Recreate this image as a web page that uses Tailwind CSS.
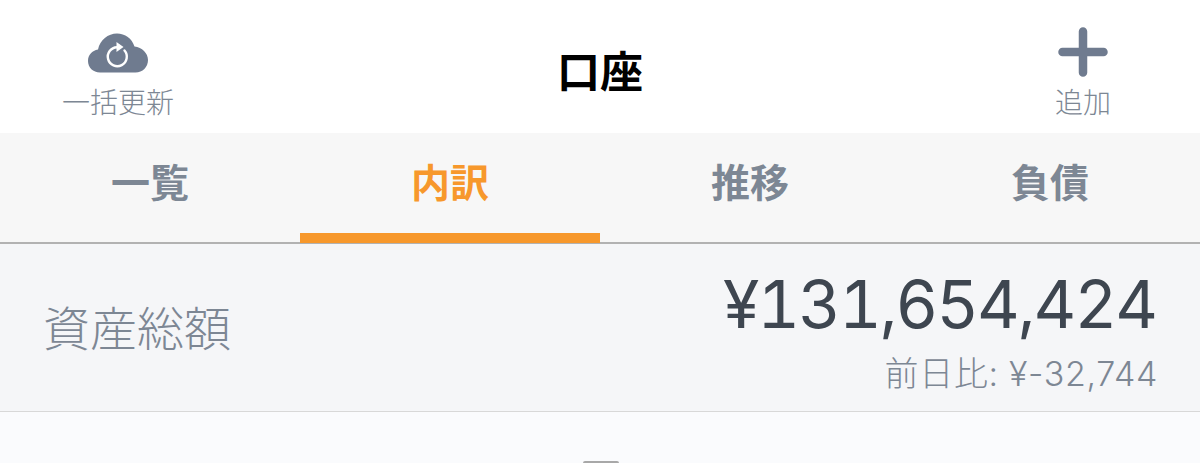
<!doctype html>
<html lang="ja"><head><meta charset="utf-8"><script src="https://cdn.jsdelivr.net/npm/@tailwindcss/browser@4"></script></head>
<body class="m-0 bg-white">
<div class="w-[1200px] h-[463px] overflow-hidden relative flex flex-col font-['Inter','Noto_Sans_CJK_JP',sans-serif]">
<header class="h-[133px] bg-white flex items-start justify-between relative">
  <div class="w-[236px] flex flex-col items-center pt-[33px]">
    <svg width="60" height="40" viewBox="0 0 60 40"><path fill="#6f7b8f" d="M12 39.500C5 39.500 0 34.500 0 28 0 22 4 17.500 10 16.500 12 7 20 .5 29 .5c8 0 15 5 17.500 13C54 14.500 60 20 60 27c0 7-5.500 12.500-12.500 12.500z"/><path fill="none" stroke="#fff" stroke-width="2.400" stroke-linecap="round" d="M36.500 17.500a9.500 9.500 0 1 1-7.500-3.300"/><path fill="#fff" d="M28.500 9l7 5-7 5z"/></svg>
    <span class="text-[28px] leading-[32px] font-light text-[#7d8794] mt-[14px]">一括更新</span>
  </div>
  <h1 class="absolute left-0 right-0 top-[49px] text-center text-[43px] leading-[46px] font-bold text-black">口座</h1>
  <div class="w-[234px] flex flex-col items-center pt-[27px]">
    <svg width="50" height="50" viewBox="0 0 50 50"><path fill="none" stroke="#6f7b8f" stroke-width="8.500" stroke-linecap="round" d="M25 4.500v41M4.500 25h41"/></svg>
    <span class="text-[28px] leading-[32px] font-light text-[#7d8794] mt-[10px]">追加</span>
  </div>
</header>
<nav class="h-[111px] bg-[#f7f7f7] border-b-2 border-[#b2b2b2] grid grid-cols-4 text-[39px] font-bold text-[#7d8794] text-center">
  <div class="pt-[27px] leading-[46px]">一覧</div>
  <div class="relative pt-[27px] leading-[46px] text-[#f7982c]">内訳<span class="absolute left-0 right-0 bottom-[-1px] h-[10px] bg-[#f7982c]"></span></div>
  <div class="pt-[27px] leading-[46px]">推移</div>
  <div class="pt-[27px] leading-[46px]">負債</div>
</nav>
<section class="h-[168px] bg-[#f5f6f8] border-b border-[#d8d8d8] flex justify-between items-start pl-[43px] pr-[42px]">
  <div class="text-[47px] leading-[52px] font-light text-[#7d8794] mt-[59px]">資産総額</div>
  <div class="text-right mt-[24px]">
    <div class="text-[66px] leading-[72px] tabular-nums tracking-[-2px] text-[#3e4650] mr-[2px]">¥131,654,424</div>
    <div class="text-[34px] leading-[40px] font-light tracking-[0.650px] text-[#7d8794] mt-[14px]">前日比: ¥-32,744</div>
  </div>
</section>
<div class="flex-1 bg-[#fafbfd]"></div>
<div class="absolute left-[583px] top-[461px] w-[36px] h-[2px] rounded-t-full bg-[#a8a8a8]"></div>
</div>
</body></html>
